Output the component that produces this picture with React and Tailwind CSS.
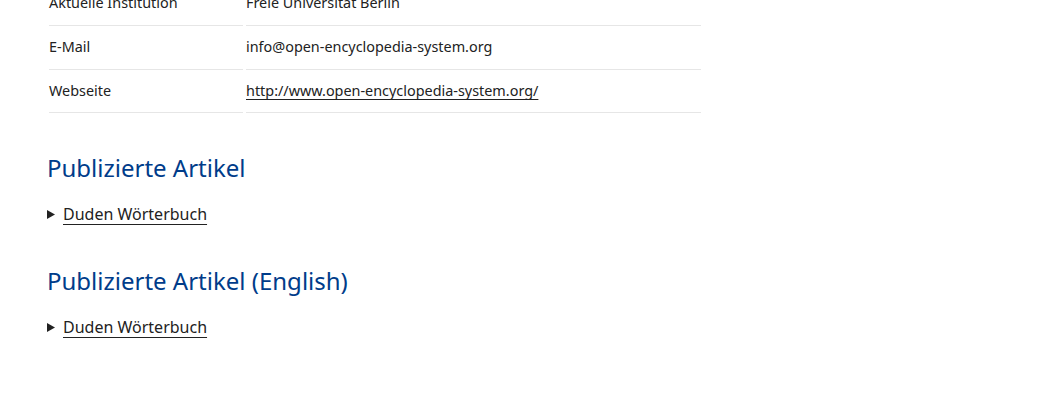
import React from 'react';

const rows = [
  { label: 'Aktuelle Institution', value: 'Freie Universität Berlin' },
  { label: 'E-Mail', value: 'info@open-encyclopedia-system.org' },
  { label: 'Webseite', value: 'http://www.open-encyclopedia-system.org/', link: true },
];

const sections = ['Publizierte Artikel', 'Publizierte Artikel (English)'];

const App = () => {
  return (
    <div className="min-h-[402px] bg-white text-[#222] font-['Noto_Sans',sans-serif] overflow-hidden">
      <div className="pl-[47px] -mt-[18px]">
        <table className="ml-[-1px] w-[658px] border-separate border-spacing-x-[3px] border-spacing-y-0 text-[14.4px]">
          <tbody>
            {rows.map((row, i) => {
              const cell = i === 2 ? 'p-0 align-middle border-b border-[#e6e6e6]' : 'p-0 pb-[2px] align-middle border-b border-[#e6e6e6]';
              return (
                <tr key={row.label} className={i === 2 ? 'h-[43px]' : 'h-[44px]'}>
                  <td className={`w-[194px] ${cell}`}>{row.label}</td>
                  <td className={cell}>
                    {row.link ? (
                      <a href="#" className="underline decoration-[#222] underline-offset-[3px]">{row.value}</a>
                    ) : (
                      row.value
                    )}
                  </td>
                </tr>
              );
            })}
          </tbody>
        </table>

        {sections.map((title, i) => (
          <div key={title} className={i === 0 ? 'mt-[39px]' : 'mt-[40px]'}>
            <h2 className="text-[24px] leading-[32px] text-[#003c8a]">{title}</h2>
            <div className="mt-[19px] flex items-center text-[16px] leading-[22px]">
              <svg width="8" height="9" viewBox="0 0 8 9" className="mr-[8px] mt-[1px]">
                <path d="M0 0 L8 4.5 L0 9 Z" fill="#222" />
              </svg>
              <a href="#" className="underline decoration-[#222] underline-offset-[4px]">Duden Wörterbuch</a>
            </div>
          </div>
        ))}
      </div>
    </div>
  );
};

export default App;
